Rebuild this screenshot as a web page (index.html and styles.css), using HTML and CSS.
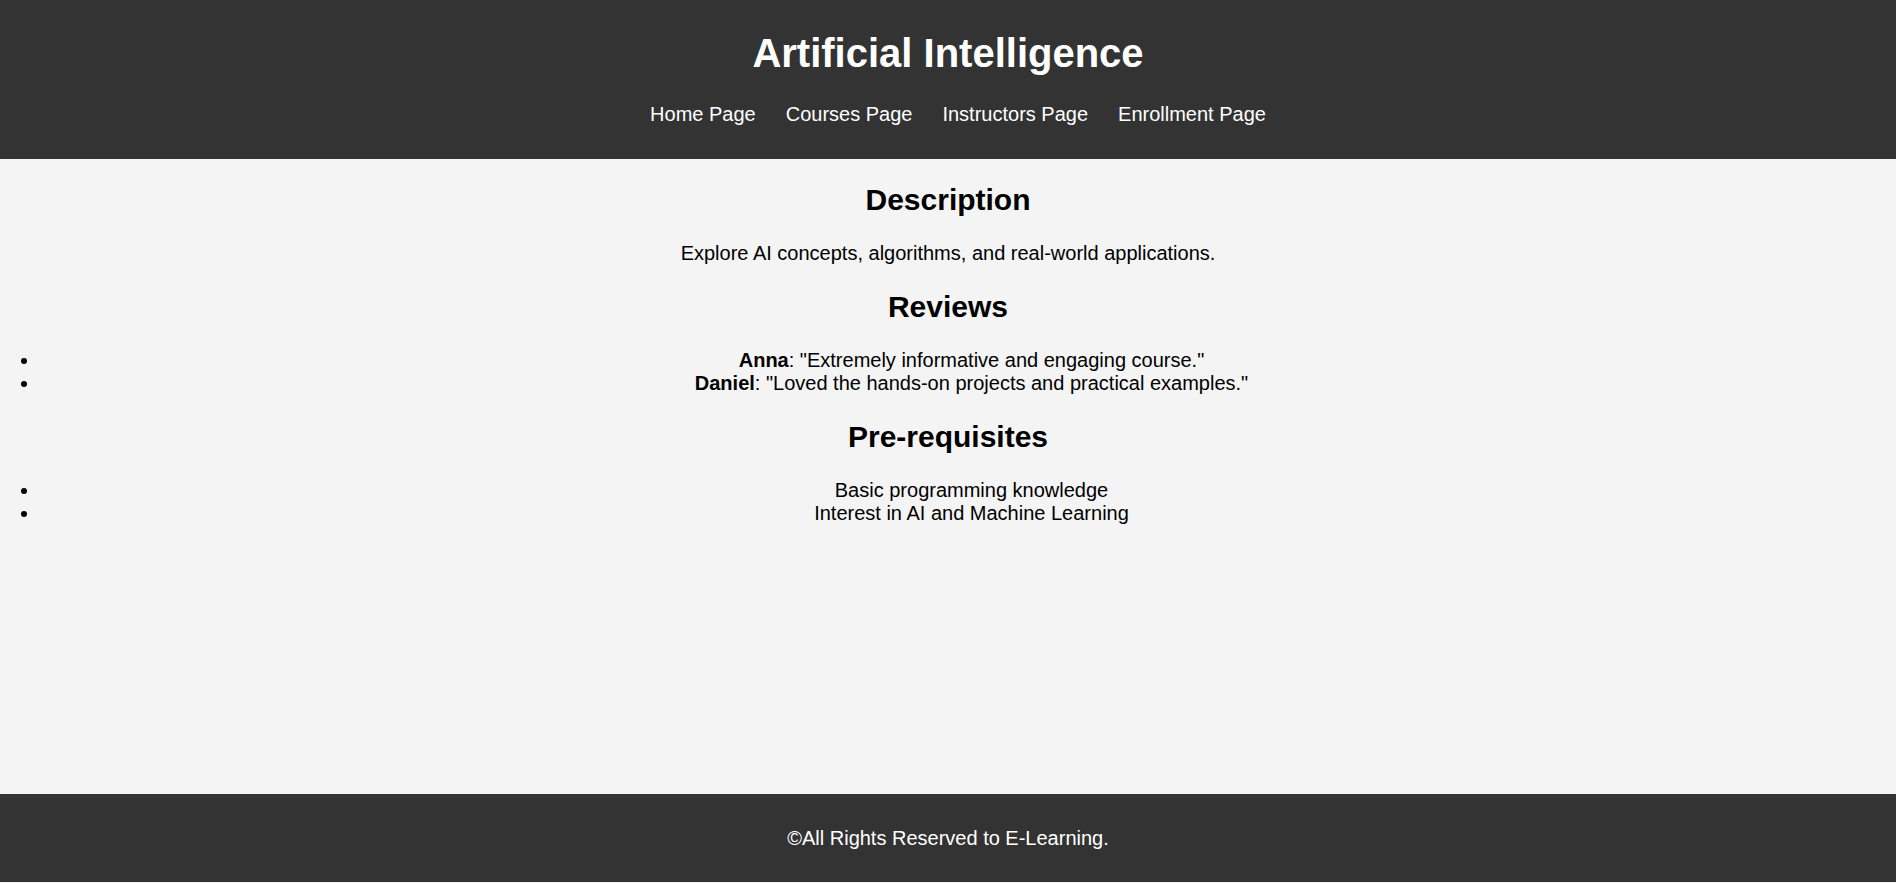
FILE: index.html
```html
<!DOCTYPE html>
<html lang="en">
<head>
<meta charset="utf-8">
<title>Artificial Intelligence</title>
<link rel="stylesheet" href="styles.css">
</head>
<body>
<header class="site-header">
  <h1 class="site-title">Artificial Intelligence</h1>
  <nav>
    <ul class="nav-list">
      <li><a href="#">Home Page</a></li>
      <li><a href="#">Courses Page</a></li>
      <li><a href="#">Instructors Page</a></li>
      <li><a href="#">Enrollment Page</a></li>
    </ul>
  </nav>
</header>
<main class="content">
  <h2 class="section-title first">Description</h2>
  <p class="text">Explore AI concepts, algorithms, and real-world applications.</p>
  <h2 class="section-title">Reviews</h2>
  <ul class="list">
    <li><strong>Anna</strong>: "Extremely informative and engaging course."</li>
    <li><strong>Daniel</strong>: "Loved the hands-on projects and practical examples."</li>
  </ul>
  <h2 class="section-title">Pre-requisites</h2>
  <ul class="list">
    <li>Basic programming knowledge</li>
    <li>Interest in AI and Machine Learning</li>
  </ul>
</main>
<footer class="site-footer">
  <p class="footer-text">&copy;All Rights Reserved to E-Learning.</p>
</footer>
</body>
</html>
```
FILE: styles.css
```css
html, body {
  margin: 0;
  padding: 0;
}

body {
  font-family: "Liberation Sans", Arial, sans-serif;
  font-size: 20px;
  background: #f4f4f4;
  color: #000;
  min-height: calc(100vh - 1px);
  display: flex;
  flex-direction: column;
  text-align: center;
}

.site-header {
  background: #333;
  color: #fff;
  padding: 31px 0 33px;
}

.site-title {
  margin: 0;
  font-size: 40px;
  font-weight: bold;
}

.nav-list {
  list-style: none;
  margin: 27px 0 0;
  padding: 0 0 0 20px;
  display: flex;
  justify-content: center;
  gap: 30px;
}

.nav-list a {
  color: #fff;
  text-decoration: none;
}

.content {
  flex: 1;
  padding-bottom: 1px;
}

.section-title {
  font-size: 30px;
  font-weight: bold;
  margin: 25px 0;
}

.section-title.first {
  margin-top: 24px;
}

.text {
  margin: 25px 0;
}

.list {
  margin: 25px 0;
  padding-left: 40px;
}

.list li {
  padding-left: 7px;
}

.site-footer {
  background: #333;
  color: #fff;
  padding: 33px 0 32px;
}

.footer-text {
  margin: 0;
}
```
